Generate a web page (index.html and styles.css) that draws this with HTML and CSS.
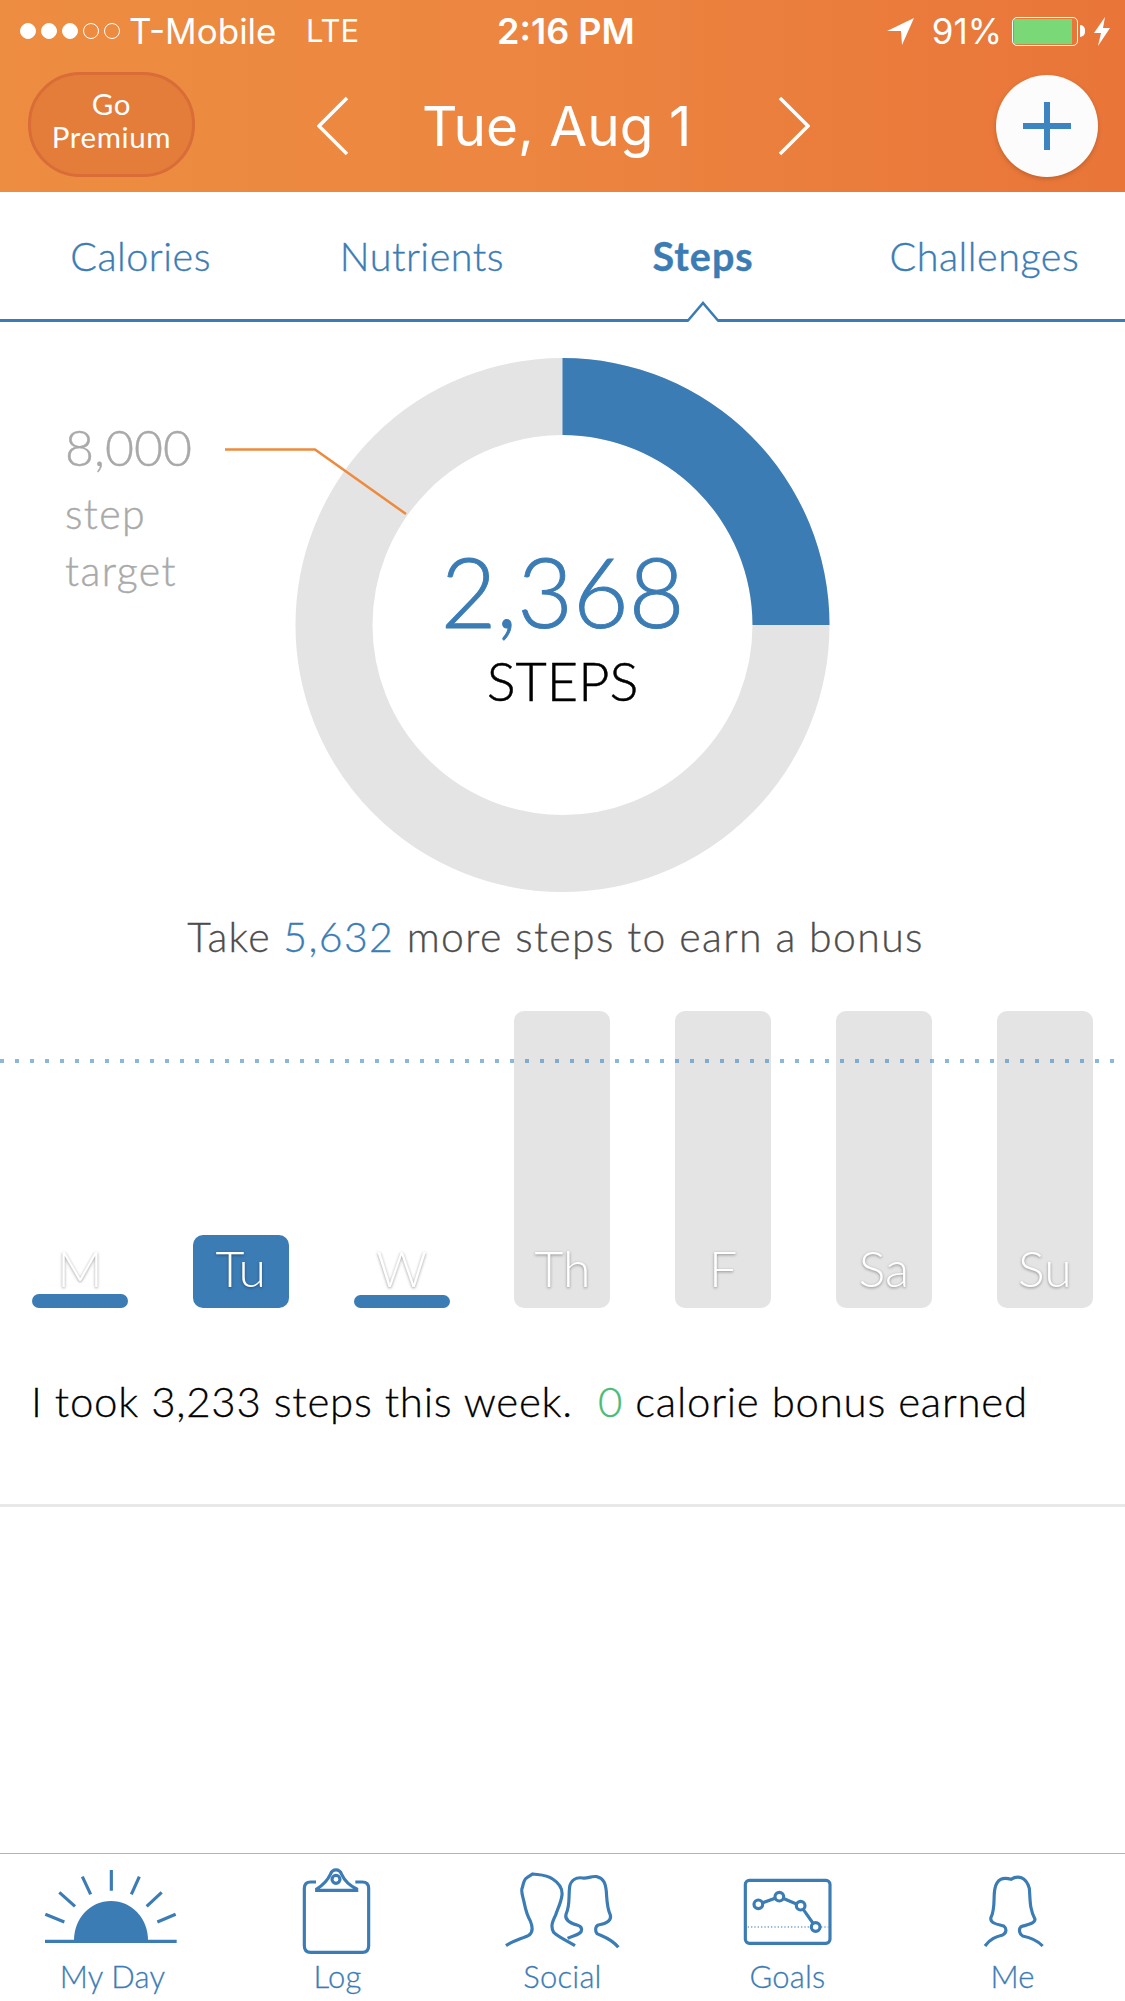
FILE: index.html
```html
<!DOCTYPE html>
<html lang="en">
<head>
<meta charset="utf-8">
<title>My Day - Steps</title>
<link rel="stylesheet" href="styles.css">
</head>
<body>
<div class="page">
  <header class="top">
    <div class="status">
      <div class="status-left">
        <div class="signal">
          <span class="dot on"></span><span class="dot on"></span><span class="dot on"></span><span class="dot"></span><span class="dot"></span>
        </div>
        <span class="carrier">T-Mobile</span>
        <span class="network">LTE</span>
      </div>
      <span class="clock">2:16 PM</span>
      <div class="status-right">
        <svg class="loc" viewBox="0 0 27 27"><path d="M0 13 L27 0 L15 27 L14 13 Z"/></svg>
        <span class="pct">91%</span>
        <div class="battery"><div class="battery-fill"></div></div>
        <span class="nub"></span>
        <svg class="bolt" viewBox="0 0 16 29"><path d="M11 0 L0 16 H7 L4 29 L16 11 H9 Z"/></svg>
      </div>
    </div>
    <div class="nav">
      <button class="premium">Go<br>Premium</button>
      <svg class="chev chev-prev" viewBox="0 0 32 60"><path d="M30 2 L2 30 L30 58"/></svg>
      <h1 class="date">Tue, Aug 1</h1>
      <svg class="chev chev-next" viewBox="0 0 32 60"><path d="M2 2 L30 30 L2 58"/></svg>
      <button class="add" aria-label="Add">
        <svg viewBox="0 0 48 48"><path d="M21 0h6v21h21v6H27v21h-6V27H0v-6h21z"/></svg>
      </button>
    </div>
  </header>

  <nav class="tabs">
    <a class="tab">Calories</a>
    <a class="tab">Nutrients</a>
    <a class="tab active">Steps<svg class="caret" viewBox="0 0 34 22"><path class="caret-gap" d="M2 22 V20 L17 3 L32 20 V22 Z"/><path class="caret-edge" d="M0 20.5 H2 L17 3 L32 20.5 H34"/></svg></a>
    <a class="tab">Challenges</a>
  </nav>

  <section class="ring">
    <svg class="ring-art" viewBox="0 0 1125 583">
      <circle class="ring-track" cx="562.5" cy="303" r="228.5"/>
      <path class="ring-value" d="M562.5 36 A267 267 0 0 1 829.5 303 H752.5 A190 190 0 0 0 562.5 113 Z"/>
      <path class="ring-leader" d="M225 127.5 H315 L406 192"/>
    </svg>
    <div class="target">
      <div class="target-num">8,000</div>
      <div class="target-word">step</div>
      <div class="target-word">target</div>
    </div>
    <div class="count">
      <div class="count-num">2,368</div>
      <div class="count-unit">STEPS</div>
    </div>
  </section>

  <p class="hint">Take <span class="blue">5,632</span> more steps to earn a bonus</p>

  <section class="week">
    <div class="goal-line"></div>
    <div class="day"><div class="fill done" style="height:14px"></div><span class="day-name">M</span></div>
    <div class="day"><div class="fill done" style="height:73px"></div><span class="day-name">Tu</span></div>
    <div class="day"><div class="fill done" style="height:13px"></div><span class="day-name">W</span></div>
    <div class="day"><div class="fill" style="height:297px"></div><span class="day-name">Th</span></div>
    <div class="day"><div class="fill" style="height:297px"></div><span class="day-name">F</span></div>
    <div class="day"><div class="fill" style="height:297px"></div><span class="day-name">Sa</span></div>
    <div class="day"><div class="fill" style="height:297px"></div><span class="day-name">Su</span></div>
  </section>

  <p class="summary">I took 3,233 steps this week. <span class="bonus"><span class="green">0</span> calorie bonus earned</span></p>

  <footer class="bar">
    <a class="bar-item">
      <svg class="bar-icon" viewBox="69 15 420 300">
        <path class="solid" d="M162 256 C162 190 210 138 273 138 C336 138 384 190 384 256 Z"/>
        <path class="line" d="M75 259 H470 M274 45 V107 M187 65 L212 118 M118 112 L165 154 M76 178 L133 201 M358 65 L334 118 M425 112 L380 154 M467 178 L412 201"/>
      </svg>
      <span>My Day</span>
    </a>
    <a class="bar-item">
      <svg class="bar-icon" viewBox="744 15 420 300">
        <path class="line" d="M888 81 H872 Q853 81 853 100 V272 Q853 292 872 292 H1027 Q1046 292 1046 272 V100 Q1046 81 1027 81 H1006"/>
        <path class="line" d="M890 106 H1010 V102 C990 92 975 80 965 58 C958 40 938 40 931 58 C921 80 906 92 890 102 Z"/>
        <circle class="line" cx="948" cy="73" r="12"/>
      </svg>
      <span>Log</span>
    </a>
    <a class="bar-item">
      <svg class="bar-icon" viewBox="36 15 420 300">
        <path class="line" d="M75 272 C95 258 125 250 143 241 C157 232 155 215 148 198 C138 180 134 165 130 145 C126 125 118 108 124 98 C128 85 128 72 138 68 L155 57 C175 60 195 58 215 72 C235 85 245 100 243 120 C240 145 228 165 224 180 C214 200 208 215 218 232 C235 248 260 258 282 272"/>
        <path class="line" d="M260 250 C272 242 298 240 301 228 C303 220 300 214 290 211 C270 205 250 195 255 178 C268 150 262 125 266 95 C270 75 285 66 305 69 C320 72 330 62 348 65 C368 70 374 85 376 110 C378 140 378 160 388 180 C392 195 380 205 352 210 C342 214 342 228 348 236 C370 246 392 252 412 277"/>
      </svg>
      <span>Social</span>
    </a>
    <a class="bar-item">
      <svg class="bar-icon" viewBox="714 15 420 300">
        <rect class="line" x="796" y="76" width="254" height="189" rx="12"/>
        <path class="dots" d="M803 216 H1045"/>
        <path class="line" d="M835 148 L898 125 L962 152 L1007 216"/>
        <circle class="node" cx="835" cy="148" r="13"/>
        <circle class="node" cx="898" cy="125" r="13"/>
        <circle class="node" cx="962" cy="152" r="13"/>
        <circle class="node" cx="1007" cy="216" r="13"/>
      </svg>
      <span>Goals</span>
    </a>
    <a class="bar-item">
      <svg class="bar-icon" viewBox="-54 0 420 300">
        <path class="line" d="M72 258 C88 236 105 230 125 225 C137 218 138 205 128 198 C110 193 85 190 90 172 C104 145 96 110 102 85 C108 58 125 50 150 58 C170 45 195 50 205 85 C208 120 205 145 222 178 C222 192 195 195 180 200 C172 208 175 222 185 228 C205 232 228 240 245 258"/>
      </svg>
      <span>Me</span>
    </a>
  </footer>
</div>
</body>
</html>
```

FILE: styles.css
```css
* { box-sizing: border-box; }

html, body {
  margin: 0;
  padding: 0;
  background: #fff;
}

body {
  font-family: "Lato", "Open Sans", sans-serif;
  color: #000;
}

.page {
  width: 1125px;
  height: 2001px;
  display: flex;
  flex-direction: column;
  overflow: hidden;
}

/* Orange header */
.top {
  height: 192px;
  background: linear-gradient(90deg, #ed8d41 0%, #ec8640 45%, #e97539 100%);
  color: #fff;
  flex: none;
}

.status {
  height: 62px;
  display: flex;
  align-items: center;
  font-family: "Inter", "Roboto", sans-serif;
  font-size: 35px;
  line-height: 62px;
}

.status-left {
  width: 497px;
  display: flex;
  align-items: center;
  padding-left: 20px;
}

.signal {
  display: flex;
  gap: 5px;
  margin-right: 9px;
}

.dot {
  width: 16px;
  height: 16px;
  border-radius: 50%;
  border: 1px solid #fff;
}

.dot.on { background: #fff; }

.carrier { width: 177px; }

.network { font-size: 31px; }

.clock { font-weight: 600; font-size: 36px; }

.status-right {
  margin-left: auto;
  display: flex;
  align-items: center;
  padding-right: 15px;
}

.loc { width: 27px; height: 27px; fill: #fff; margin-right: 18px; }

.pct { margin-right: 10px; }

.battery {
  width: 66px;
  height: 29px;
  border: 1.5px solid #fff;
  border-radius: 5px;
  padding: 1px;
}

.battery-fill {
  width: 93%;
  height: 100%;
  background: #7ad976;
}

.nub {
  width: 5px;
  height: 12px;
  margin-left: 2px;
  margin-right: 9px;
  background: #fff;
  border-radius: 0 6px 6px 0;
}

.bolt { width: 16px; height: 29px; fill: #fff; }

.nav {
  height: 130px;
  display: flex;
  align-items: center;
  padding: 0 27px 2px 28px;
}

.premium {
  width: 167px;
  height: 105px;
  margin-bottom: 3px;
  border-radius: 52px;
  border: 3px solid #d96c37;
  background: #e37d39;
  color: #fff;
  font-family: "Lato", sans-serif;
  font-size: 29.5px;
  line-height: 33px;
  letter-spacing: 0.6px;
  padding: 0 0 10px;
}

.chev {
  width: 32px;
  height: 60px;
  fill: none;
  stroke: #fff;
  stroke-width: 3.5;
}

.chev-prev { margin-left: 122px; }

.date {
  margin: 0 0 0 73px;
  width: 356px;
  font-family: "Inter", "Roboto", sans-serif;
  font-weight: 400;
  font-size: 55px;
  line-height: 64px;
}

.add {
  margin-left: auto;
  width: 102px;
  height: 102px;
  border-radius: 50%;
  border: 0;
  background: #fcfcfc;
  box-shadow: 0 2px 4px rgba(120, 60, 20, 0.35);
  display: flex;
  align-items: center;
  justify-content: center;
  padding: 0;
}

.add svg { width: 48px; height: 48px; fill: #3d85c1; }

/* Section tabs */
.tabs {
  position: relative;
  height: 130px;
  flex: none;
  display: grid;
  grid-template-columns: repeat(4, 1fr);
  border-bottom: 3px solid #3b7cb5;
  color: #3b7cb5;
  font-size: 39.5px;
  font-weight: 300;
  -webkit-text-stroke: 0.35px #3b7cb5;
  align-items: center;
  text-align: center;
}

.tab { letter-spacing: 0.5px; }

.tab.active { font-weight: 700; letter-spacing: 1px; }

.caret {
  position: absolute;
  left: 686px;
  top: 108px;
  width: 34px;
  height: 22px;
}

.caret-gap { fill: #fff; }

.caret-edge { fill: none; stroke: #3b7cb5; stroke-width: 2.5; }

/* Step ring */
.ring {
  height: 583px;
  flex: none;
  display: grid;
}

.ring > * { grid-area: 1 / 1; }

.ring-art { width: 1125px; height: 583px; display: block; }

.ring-track { fill: none; stroke: #e4e4e4; stroke-width: 77; }

.ring-value { fill: #3b7cb5; }

.ring-leader { fill: none; stroke: #ee8a3e; stroke-width: 2.5; }

.target {
  padding: 95px 0 0 65px;
  color: #a9a9a9;
  justify-self: start;
  align-self: start;
  font-weight: 300;
  -webkit-text-stroke: 0.4px #a9a9a9;
}

.target-num { font-size: 50px; line-height: 60px; margin-bottom: 8px; }

.target-word { font-size: 41px; line-height: 57px; letter-spacing: 1.4px; }

.count {
  justify-self: center;
  align-self: start;
  padding-top: 209px;
  text-align: center;
}

.count-num {
  font-size: 96px;
  line-height: 119px;
  font-weight: 300;
  color: #3b7cb5;
  -webkit-text-stroke: 1px #3b7cb5;
}

.count-unit { font-size: 54px; line-height: 62px; font-weight: 300; -webkit-text-stroke: 0.5px #000; }

.hint {
  margin: 0;
  height: 106px;
  flex: none;
  padding-right: 14px;
  text-align: center;
  font-size: 41px;
  line-height: 63px;
  font-weight: 300;
  color: #4d4d4d;
  letter-spacing: 1.35px;
  -webkit-text-stroke: 0.3px #4d4d4d;
}

.blue { color: #3b7cb5; -webkit-text-stroke-color: #3b7cb5; }

/* Week bars */
.week {
  position: relative;
  height: 297px;
  flex: none;
  display: grid;
  grid-template-columns: repeat(7, 96px);
  column-gap: 64.8px;
  padding-left: 32px;
}

.goal-line {
  position: absolute;
  left: 0;
  right: 0;
  top: 48px;
  height: 4px;
  background: repeating-linear-gradient(90deg, rgba(64, 135, 190, 0.6) 0 4px, transparent 4px 15px);
}

.day {
  display: grid;
  height: 297px;
}

.day > * { grid-area: 1 / 1; }

.fill {
  align-self: end;
  background: #e4e4e4;
  border-radius: 10px;
}

.fill.done { background: #3b7cb5; }

.day-name {
  position: relative;
  align-self: end;
  justify-self: center;
  margin-bottom: 12px;
  font-size: 50px;
  line-height: 56px;
  font-weight: 300;
  color: #fff;
  text-shadow: 0 1px 3px rgba(0, 0, 0, 0.4);
}

/* Weekly summary */
.summary {
  margin: 0;
  height: 199px;
  flex: none;
  padding: 63px 0 0 31px;
  font-size: 42px;
  line-height: 60px;
  font-weight: 300;
  letter-spacing: 0.75px;
  -webkit-text-stroke: 0.3px #000;
  border-bottom: 3px solid #e8e8e8;
}

.bonus { margin-left: 13px; }

.green { color: #4dbb73; -webkit-text-stroke-color: #4dbb73; }

/* Bottom navigation */
.bar {
  margin-top: auto;
  height: 148px;
  flex: none;
  display: grid;
  grid-template-columns: repeat(5, 225px);
  border-top: 1px solid #b4b4b4;
  color: #3b7cb5;
  text-align: center;
  font-size: 31px;
  font-weight: 300;
  -webkit-text-stroke: 0.3px #3b7cb5;
}

.bar-item {
  display: flex;
  flex-direction: column;
  align-items: center;
  padding-top: 6px;
}

.bar-item span { line-height: 40px; margin-top: -4px; letter-spacing: 0.2px; }

.bar-icon { width: 140px; height: 100px; display: block; }

.bar-icon .solid { fill: #3b7cb5; }

.bar-icon .line { fill: none; stroke: #3b7cb5; stroke-width: 9.5; }

.bar-icon .dots { fill: none; stroke: #3b7cb5; stroke-width: 3.5; stroke-dasharray: 4 6; }

.bar-icon .node { fill: #fff; stroke: #3b7cb5; stroke-width: 9.5; }
```
